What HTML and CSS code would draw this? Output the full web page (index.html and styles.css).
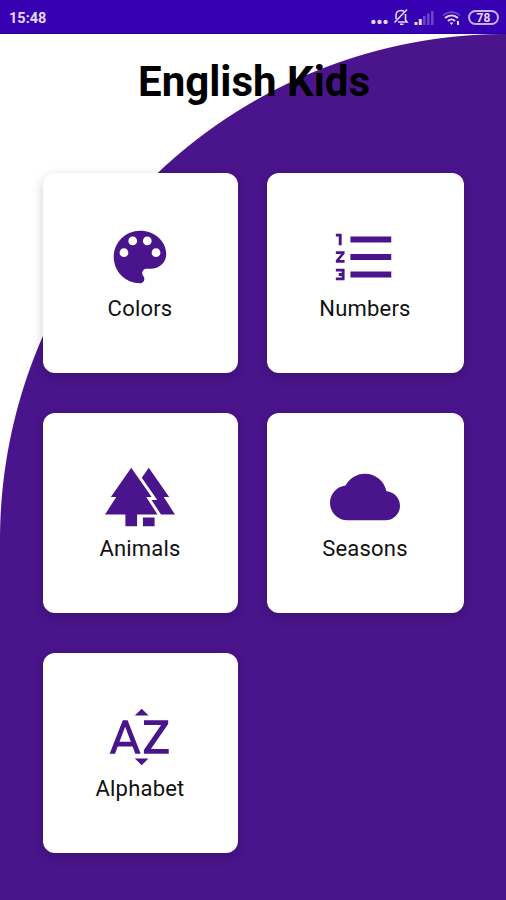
FILE: index.html
```html
<!DOCTYPE html>
<html lang="en">
<head>
    <meta charset="UTF-8">
    <meta name="viewport" content="width=device-width, initial-scale=1.0">
    <title>English Kids</title>
    <link rel="stylesheet" href="styles.css">
</head>
<body>
    <div class="status-bar">
        <span class="time">15:48</span>
        <div class="status-icons">
            <svg class="dots" width="17" height="18" viewBox="0 0 17 18">
                <circle cx="2.400" cy="12.900" r="2.200"/><circle cx="8.500" cy="12.900" r="2.200"/><circle cx="14.600" cy="12.900" r="2.200"/>
            </svg>
            <svg class="bell" width="16" height="18" viewBox="0 0 16 18">
                <path d="M3 11V7.500C3 4.500 5 2.500 8 2.500q2 0 3 1M12.500 6v6l1.500 2H5M7 16.200h3.500M1.500 14.500L14 1.500"/>
            </svg>
            <svg class="signal" width="20" height="18" viewBox="0 0 20 18">
                <path d="M.5 13h3v3h-3zM4.800 10h3v6h-3z"/>
                <path class="weak" d="M9 7h2.600v9H9zM13 4.500h2.600V16H13zM17 2h2.600v14H17z"/>
            </svg>
            <svg class="wifi" width="19" height="18" viewBox="0 0 19 18">
                <path class="weak-line" d="M1 6.500C6 2 13 2 18 6.500"/>
                <path class="line" d="M3 9C7 5.500 12 5.500 16 9M6 12C8 10 11 10 13 12"/>
                <path d="M7.500 13.500h4l-2 2.500zM15 12h2v4h-2z"/>
            </svg>
            <span class="battery">78</span>
        </div>
    </div>

    <div class="screen">
        <h1>English Kids</h1>

        <div class="grid">
            <div class="card">
                <svg class="icon" viewBox="0 0 24 24">
                    <path d="M12 3c-4.970 0-9 4.030-9 9s4.030 9 9 9c.83 0 1.500-.67 1.500-1.500 0-.39-.15-.74-.39-1.010-.23-.26-.38-.61-.38-.99 0-.83.67-1.500 1.500-1.500H16c2.760 0 5-2.240 5-5 0-4.420-4.030-8-9-8zm-5.500 9c-.83 0-1.500-.67-1.500-1.500S5.670 9 6.500 9 8 9.670 8 10.500 7.330 12 6.500 12zm3-4C8.670 8 8 7.330 8 6.500S8.670 5 9.500 5s1.500.67 1.500 1.500S10.330 8 9.500 8zm5 0c-.83 0-1.500-.67-1.500-1.500S13.670 5 14.500 5s1.500.67 1.500 1.500S15.330 8 14.500 8zm3 4c-.83 0-1.500-.67-1.500-1.500S16.670 9 17.500 9s1.500.67 1.500 1.500-.67 1.500-1.500 1.500z"/>
                </svg>
                <p>Colors</p>
            </div>
            <div class="card">
                <svg class="icon" viewBox="0 0 24 24">
                    <path d="M2 17h2v.5H3v1h1v.5H2v1h3v-4H2v1zm1-9h1V4H2v1h1v3zm-1 3h1.800L2 13.100v.9h3v-1H3.200L5 10.900V10H2v1zm5-6v2h14V5H7zm0 14h14v-2H7v2zm0-6h14v-2H7v2z"/>
                </svg>
                <p>Numbers</p>
            </div>
            <div class="card">
                <svg class="icon" viewBox="0 0 24 24">
                    <path d="M16 12h-1.860L18 18h-7v4H7v-4H0l3.860-6H2L9 2z"/>
                    <path d="M20.140 12H22L15 2l-2.390 3.410L17.920 13h-1.950l3.220 5H24zM13 19h4v3h-4z"/>
                </svg>
                <p>Animals</p>
            </div>
            <div class="card">
                <svg class="icon" viewBox="0 0 24 24">
                    <path d="M19.350 10.040C18.670 6.590 15.640 4 12 4 9.110 4 6.600 5.640 5.350 8.040 2.340 8.360 0 10.910 0 14c0 3.310 2.690 6 6 6h13c2.760 0 5-2.240 5-5 0-2.640-2.050-4.780-4.650-4.960z"/>
                </svg>
                <p>Seasons</p>
            </div>
            <div class="card">
                <svg class="icon" viewBox="0 0 24 24">
                    <path d="M14.940 4.660h-4.720l2.360-2.360zm-4.690 14.710h4.660l-2.330 2.330zM6.100 6.270L1.600 17.730h1.840l.92-2.450h5.110l.92 2.450h1.840L7.740 6.270H6.100zm-1.130 7.370l1.940-5.180 1.940 5.180H4.970zm10.760 2.500h6.120v1.590h-8.530v-1.290l5.920-8.560h-5.880v-1.600h8.300v1.260l-5.930 8.600z"/>
                </svg>
                <p>Alphabet</p>
            </div>
        </div>
    </div>
</body>
</html>
```
FILE: styles.css
```css
* {
    box-sizing: border-box;
}
body {
    margin: 0;
    height: 900px;
    overflow: hidden;
    font-family: Roboto, sans-serif;
    background-color: #fff;
}
.status-bar {
    display: flex;
    justify-content: space-between;
    align-items: center;
    height: 34px;
    padding: 1px 7px 0 9px;
    background-color: #3700b3;
    border-bottom: 1px solid #2a009c;
    color: #e4daf7;
}
.time {
    padding-top: 2px;
    font-size: 14.5px;
    font-weight: 700;
}
.status-icons {
    display: flex;
    align-items: center;
    gap: 5px;
    fill: #e4daf7;
}
.dots {
    margin-top: 1px;
}
.bell {
    fill: none;
    stroke: #e4daf7;
    stroke-width: 1.6;
}
.signal {
    margin-top: 1px;
}
.weak {
    fill: #6a45c8;
}
.wifi {
    margin: 2px 0 0 3px;
}
.line {
    fill: none;
    stroke: #e4daf7;
    stroke-width: 2;
}
.weak-line {
    fill: none;
    stroke: #6a45c8;
    stroke-width: 1.6;
}
.battery {
    width: 31px;
    height: 15px;
    margin-left: 2px;
    border: 2px solid #c6b3ee;
    border-radius: 8px;
    font-size: 12px;
    font-weight: 700;
    line-height: 12px;
    text-align: center;
}
.screen {
    height: 866px;
    background-color: #4a148c;
    background-image: radial-gradient(circle at 506px 506px, #4a148c 505.5px, #fff 506.5px);
    background-size: 506px 506px;
    background-repeat: no-repeat;
}
h1 {
    margin: 0;
    padding: 23px 0 0 2px;
    height: 139px;
    font-size: 42px;
    font-weight: 700;
    line-height: 50px;
    text-align: center;
    color: #000;
}
.grid {
    display: grid;
    grid-template-columns: 195px 197px;
    grid-auto-rows: 199.5px;
    gap: 40.5px 29px;
    padding-left: 43px;
}
.card {
    display: flex;
    flex-direction: column;
    align-items: center;
    padding: 49px 2px 0 0;
    background-color: #fff;
    border-radius: 12px;
    box-shadow: 0 4px 12px rgba(0,0,0,0.2);
}
.icon {
    width: 70px;
    height: 70px;
    fill: #4a148c;
}
.card p {
    margin: 3px 0 0 1px;
    font-size: 22px;
    line-height: 28px;
    letter-spacing: 0.2px;
    color: #111;
}
```
